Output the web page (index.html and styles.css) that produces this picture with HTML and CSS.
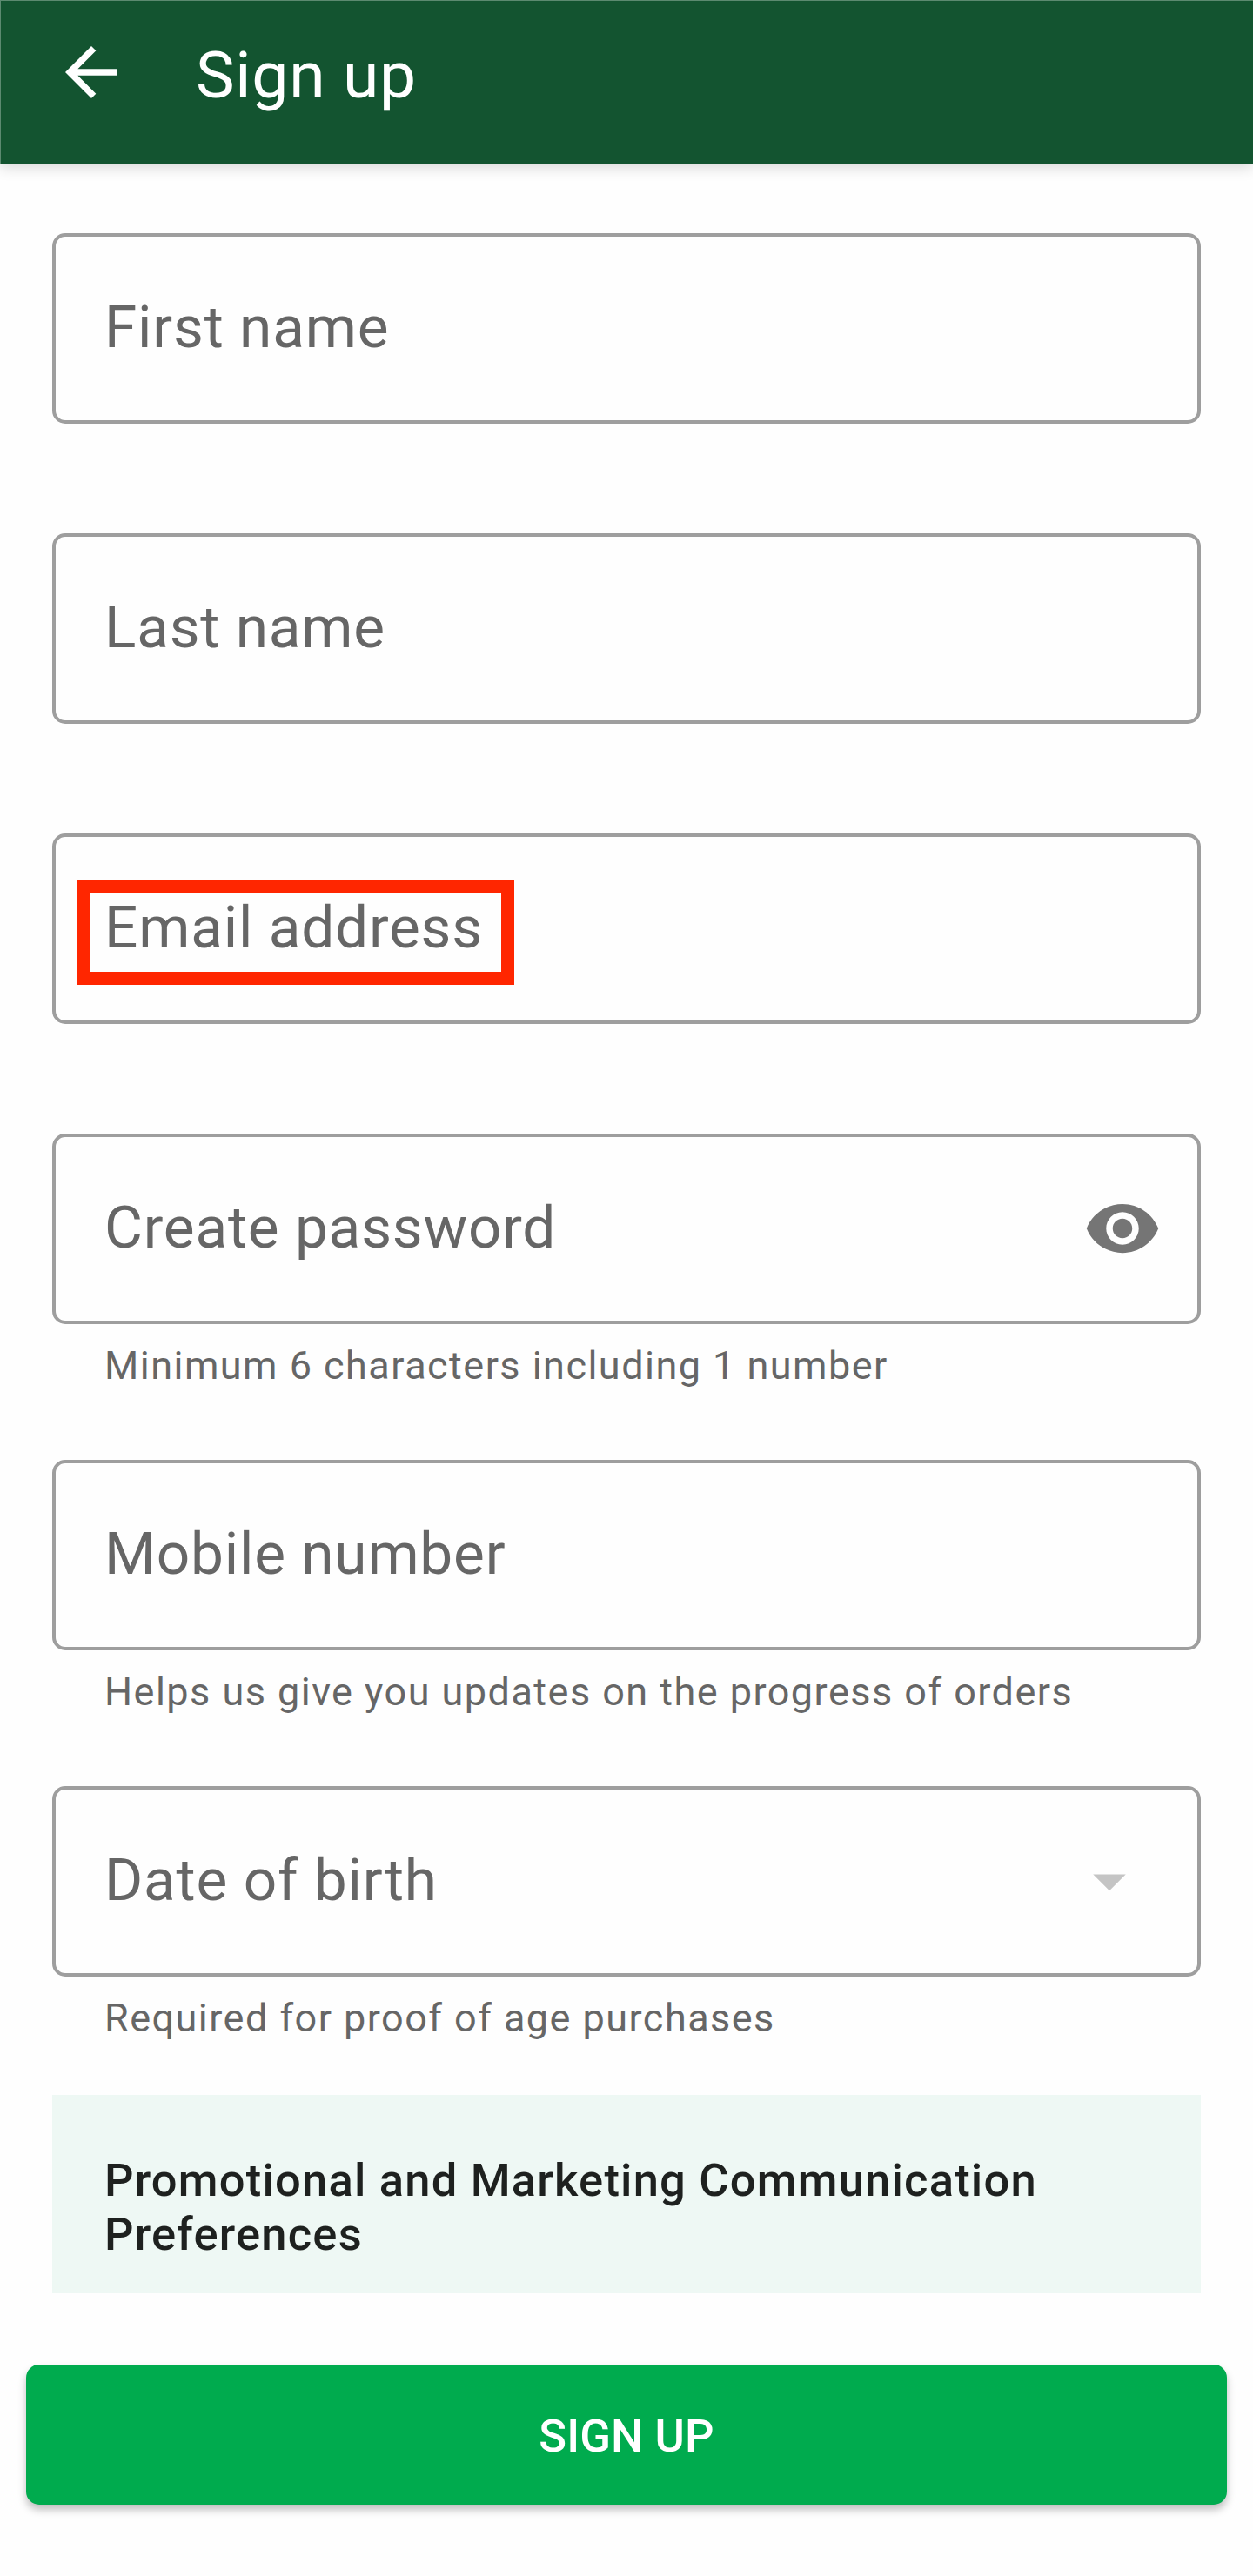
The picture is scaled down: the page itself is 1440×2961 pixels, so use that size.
FILE: index.html
```html
<!DOCTYPE html>
<html lang="en">
<head>
<meta charset="utf-8">
<title>Sign up</title>
<link rel="stylesheet" href="styles.css">
</head>
<body>
<header class="app-bar">
  <svg class="icon" viewBox="0 0 24 24"><path d="M20 11H7.83l5.59-5.59L12 4l-8 8 8 8 1.41-1.41L7.83 13H20v-2z"/></svg>
  <h1 class="app-title">Sign up</h1>
</header>
<main class="form">
  <div class="field"><div class="box"><span class="label">First name</span></div></div>
  <div class="field"><div class="box"><span class="label">Last name</span></div></div>
  <div class="field"><div class="box"><span class="label">Email address</span><span class="highlight"></span></div></div>
  <div class="field field-help">
    <div class="box">
      <span class="label">Create password</span>
      <svg class="icon icon-eye" viewBox="0 0 24 24"><path d="M12 4.5C7 4.5 2.73 7.61 1 12c1.73 4.39 6 7.5 11 7.5s9.27-3.11 11-7.5c-1.73-4.39-6-7.5-11-7.5zM12 17c-2.76 0-5-2.24-5-5s2.24-5 5-5 5 2.24 5 5-2.24 5-5 5zm0-8c-1.66 0-3 1.34-3 3s1.34 3 3 3 3-1.34 3-3-1.34-3-3-3z"/></svg>
    </div>
    <p class="help">Minimum 6 characters including 1 number</p>
  </div>
  <div class="field field-help">
    <div class="box"><span class="label">Mobile number</span></div>
    <p class="help">Helps us give you updates on the progress of orders</p>
  </div>
  <div class="field field-dob">
    <div class="box">
      <span class="label">Date of birth</span>
      <svg class="icon icon-caret" viewBox="0 0 24 24"><path d="M7 10l5 5 5-5z"/></svg>
    </div>
    <p class="help">Required for proof of age purchases</p>
  </div>
  <section class="promo"><h2 class="promo-title">Promotional and Marketing Communication Preferences</h2></section>
</main>
<footer class="actions"><button class="submit" type="button">SIGN UP</button></footer>
</body>
</html>
```

FILE: styles.css
```css
* { box-sizing: border-box; margin: 0; }

body {
  height: 2961px;
  background: #fefefe;
  font-family: Roboto, sans-serif;
  color: #666;
}

.icon { width: 90px; height: 90px; flex: none; fill: currentColor; }

.app-bar {
  display: flex;
  align-items: flex-start;
  height: 188px;
  padding: 37px 59px;
  border-top: 1px solid #5c8a70;
  border-left: 1px solid #5c8a70;
  background: #135430;
  color: #fff;
  box-shadow: 0 4px 16px rgba(0, 0, 0, .16);
}

.app-title {
  margin: 4px 0 0 75px;
  font-size: 75px;
  font-weight: 400;
  line-height: 88px;
  letter-spacing: .8px;
}

.form { padding: 80px 60px 0; }

.field { height: 345px; }
.field-help { height: 375px; }
.field-dob { height: 355px; }

.box {
  position: relative;
  display: flex;
  align-items: center;
  justify-content: space-between;
  height: 219px;
  padding: 0 41px 0 56px;
  border: 4px solid #9e9e9e;
  border-radius: 15px;
}

.label {
  padding-bottom: 3px;
  font-size: 67.5px;
  line-height: 80px;
  letter-spacing: .8px;
}

.highlight {
  position: absolute;
  left: 25px;
  top: 50px;
  width: 502px;
  height: 120px;
  border: 15px solid #ff2600;
}

.icon-eye { margin-bottom: 1px; color: #757575; }
.icon-caret { margin: 0 15px 2px 0; color: #c4c4c4; }

.help {
  padding: 21px 60px 0;
  font-size: 45px;
  line-height: 54px;
  letter-spacing: 1.47px;
}

.promo {
  height: 228px;
  padding: 67px 60px 0;
  background: #eef8f4;
}

.promo-title {
  font-size: 52.5px;
  font-weight: 500;
  line-height: 62px;
  letter-spacing: 1.2px;
  color: #1e211f;
}

.actions { padding: 82px 30px 0; }

.submit {
  display: block;
  width: 100%;
  height: 161px;
  padding: 3px 0 0;
  border: 0;
  border-radius: 15px;
  background: #00ab4e;
  color: #fff;
  font: 500 52.5px/62px Roboto, sans-serif;
  letter-spacing: .1px;
  box-shadow: 0 6px 10px rgba(0, 0, 0, .25);
}
```
